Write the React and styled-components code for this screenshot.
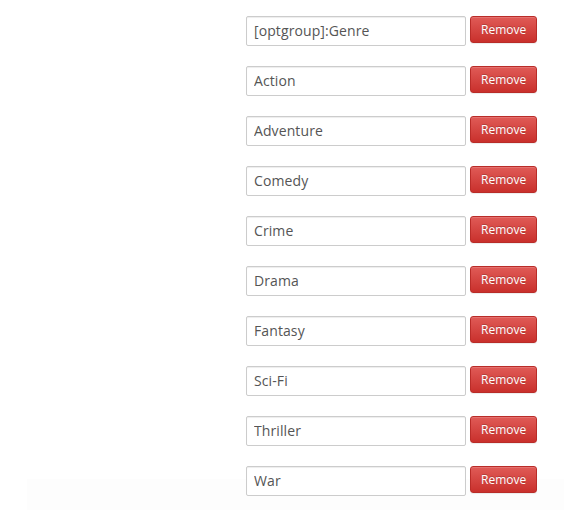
import React from 'react';
import styled, { createGlobalStyle } from 'styled-components';

const GlobalStyle = createGlobalStyle`
  html, body {
    margin: 0;
    padding: 0;
    background: #fff;
  }
  body {
    font-family: "Open Sans", "Liberation Sans", sans-serif;
  }
`;

const Page = styled.div`
  width: 564px;
  height: 510px;
  overflow: hidden;
  box-sizing: border-box;
  padding: 16px 0 0 246px;
  /* faint footer strip behind the last row */
  background: linear-gradient(#fdfdfd, #fdfdfd) 27px 479px / 100% 100% no-repeat, #fff;
`;

const List = styled.div`
  display: flex;
  flex-direction: column;
  gap: 20px;
`;

const Row = styled.div`
  display: flex;
  align-items: flex-start;
  gap: 4px;
`;

const Field = styled.input`
  box-sizing: border-box;
  width: 220px;
  height: 30px;
  margin: 0;
  padding: 0 7px 2px;
  border: 1px solid #ccc;
  border-radius: 2px;
  box-shadow: inset 0 1px 1px rgba(0, 0, 0, 0.075);
  background: #fff;
  font-family: "Open Sans", "Liberation Sans", sans-serif;
  font-size: 14px;
  letter-spacing: 0.1px;
  color: #555;
  outline: none;
`;

const RemoveButton = styled.button`
  box-sizing: border-box;
  width: 67px;
  height: 27px;
  margin: 0;
  padding: 0 10px;
  border: 1px solid #b92c28;
  border-radius: 3px;
  background: linear-gradient(to bottom, #e05b57 0%, #c9302c 100%);
  box-shadow: inset 0 1px 0 rgba(255, 255, 255, 0.15), 0 1px 1px rgba(0, 0, 0, 0.075);
  color: #fff;
  font-family: "Open Sans", "Liberation Sans", sans-serif;
  font-size: 12px;
  line-height: 24px;
  text-shadow: 0 -1px 0 rgba(0, 0, 0, 0.2);
  cursor: pointer;
`;

const options = [
  '[optgroup]:Genre',
  'Action',
  'Adventure',
  'Comedy',
  'Crime',
  'Drama',
  'Fantasy',
  'Sci-Fi',
  'Thriller',
  'War',
];

export default function App() {
  return (
    <>
      <GlobalStyle />
      <Page>
        <List>
          {options.map((opt) => (
            <Row key={opt}>
              <Field type="text" defaultValue={opt} />
              <RemoveButton type="button">Remove</RemoveButton>
            </Row>
          ))}
        </List>
      </Page>
    </>
  );
}
